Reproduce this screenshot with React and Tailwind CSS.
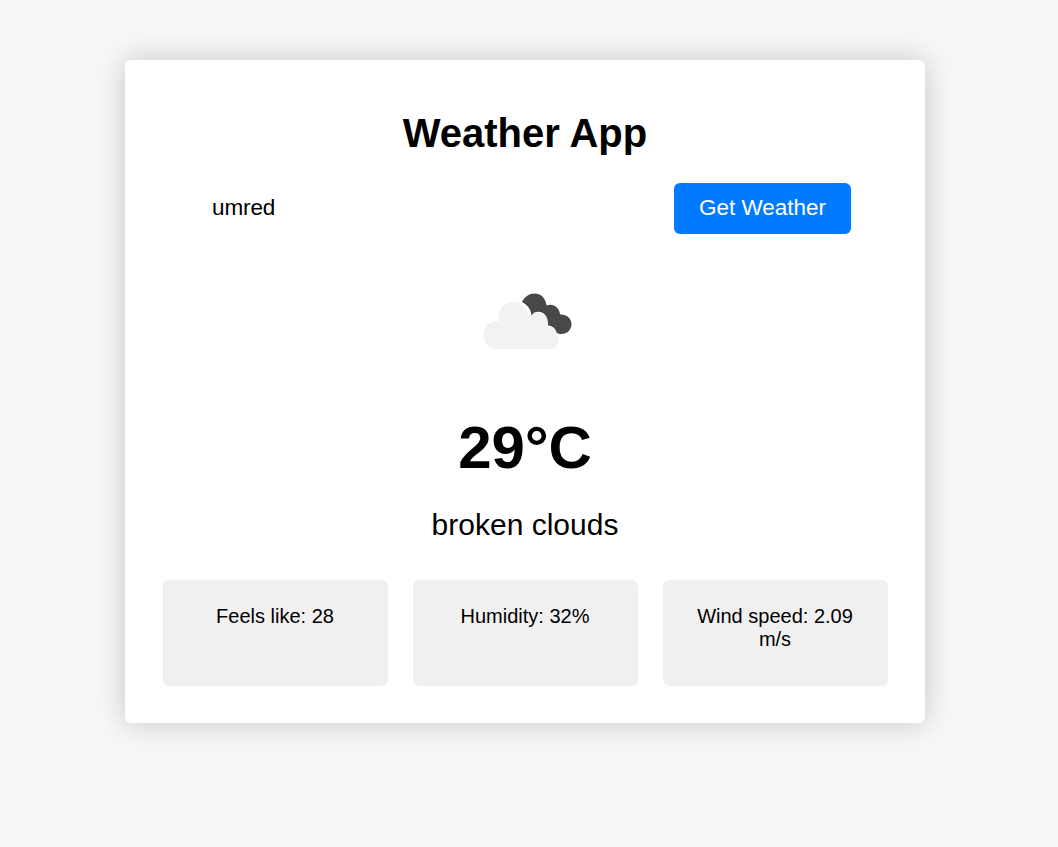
const details = ["Feels like: 28", "Humidity: 32%", "Wind speed: 2.09 m/s"];

function CloudIcon() {
  return (
    <svg className="blur-[0.5px]" width="125" height="125" viewBox="0 0 125 125" aria-hidden="true">
      <g fill="#f2f2f2">
        <circle cx="34.300" cy="76" r="14" />
        <circle cx="50.300" cy="57.500" r="14.800" />
        <circle cx="74" cy="65" r="11.500" />
        <circle cx="84.500" cy="79" r="11.300" />
        <path d="M34 90V70L45 58H66L84 70V90Z" />
      </g>
      <path
        fill="#484848"
        d="M59 43C62 37.500 66 34.500 71.500 34.500C77.500 34.500 82 38 83.700 46.500C89.500 44 96.500 48 97 55.500C103 55 108.500 59 108.500 65C108.500 71 104 75 98.500 75C96.500 75 95 74.500 93.500 73.500C92.500 69.500 90 67 85 66.500C85.500 60 83 53.500 76 52.800C73 52.600 70.500 53.200 68.500 56.500C68 50.500 65 46.500 59 43Z"
      />
    </svg>
  );
}

export default function App() {
  return (
    <div className="min-h-screen bg-[#f7f7f7] pt-[60px] pl-[125px] font-['Liberation_Sans',Arial,sans-serif] text-black">
      <main className="flex h-[663px] w-[800px] flex-col items-center rounded-[6px] bg-white px-[38px] pt-[50px] shadow-[0_0_31px_rgba(0,0,0,0.2)]">
        <h1 className="text-[40px] leading-[47px] font-bold">Weather App</h1>
        <form className="mt-[26px] flex w-[652px] justify-between" onSubmit={(e) => e.preventDefault()}>
          <input
            className="h-[51px] w-[420px] pl-[13px] pb-px text-[22.5px] tracking-[-0.1px] outline-none"
            defaultValue="umred"
            aria-label="City"
          />
          <button className="h-[51px] w-[177px] rounded-[6px] bg-[#007bff] pb-px text-[22.5px] text-white">
            Get Weather
          </button>
        </form>
        <div className="mt-[25px] h-[125px]">
          <CloudIcon />
        </div>
        <div className="mt-[29px] text-[60px] leading-[69px] font-bold tracking-[-0.2px]">29°C</div>
        <div className="mt-[26px] text-[30px] leading-[34px]">broken clouds</div>
        <div className="mt-[38px] flex gap-[25px]">
          {details.map((detail) => (
            <div key={detail} className="h-[106px] w-[225px] rounded-[6px] bg-[#f0f0f0] px-[25px] pt-[25px] text-center text-[20px] leading-[23px]">
              {detail}
            </div>
          ))}
        </div>
      </main>
    </div>
  );
}
